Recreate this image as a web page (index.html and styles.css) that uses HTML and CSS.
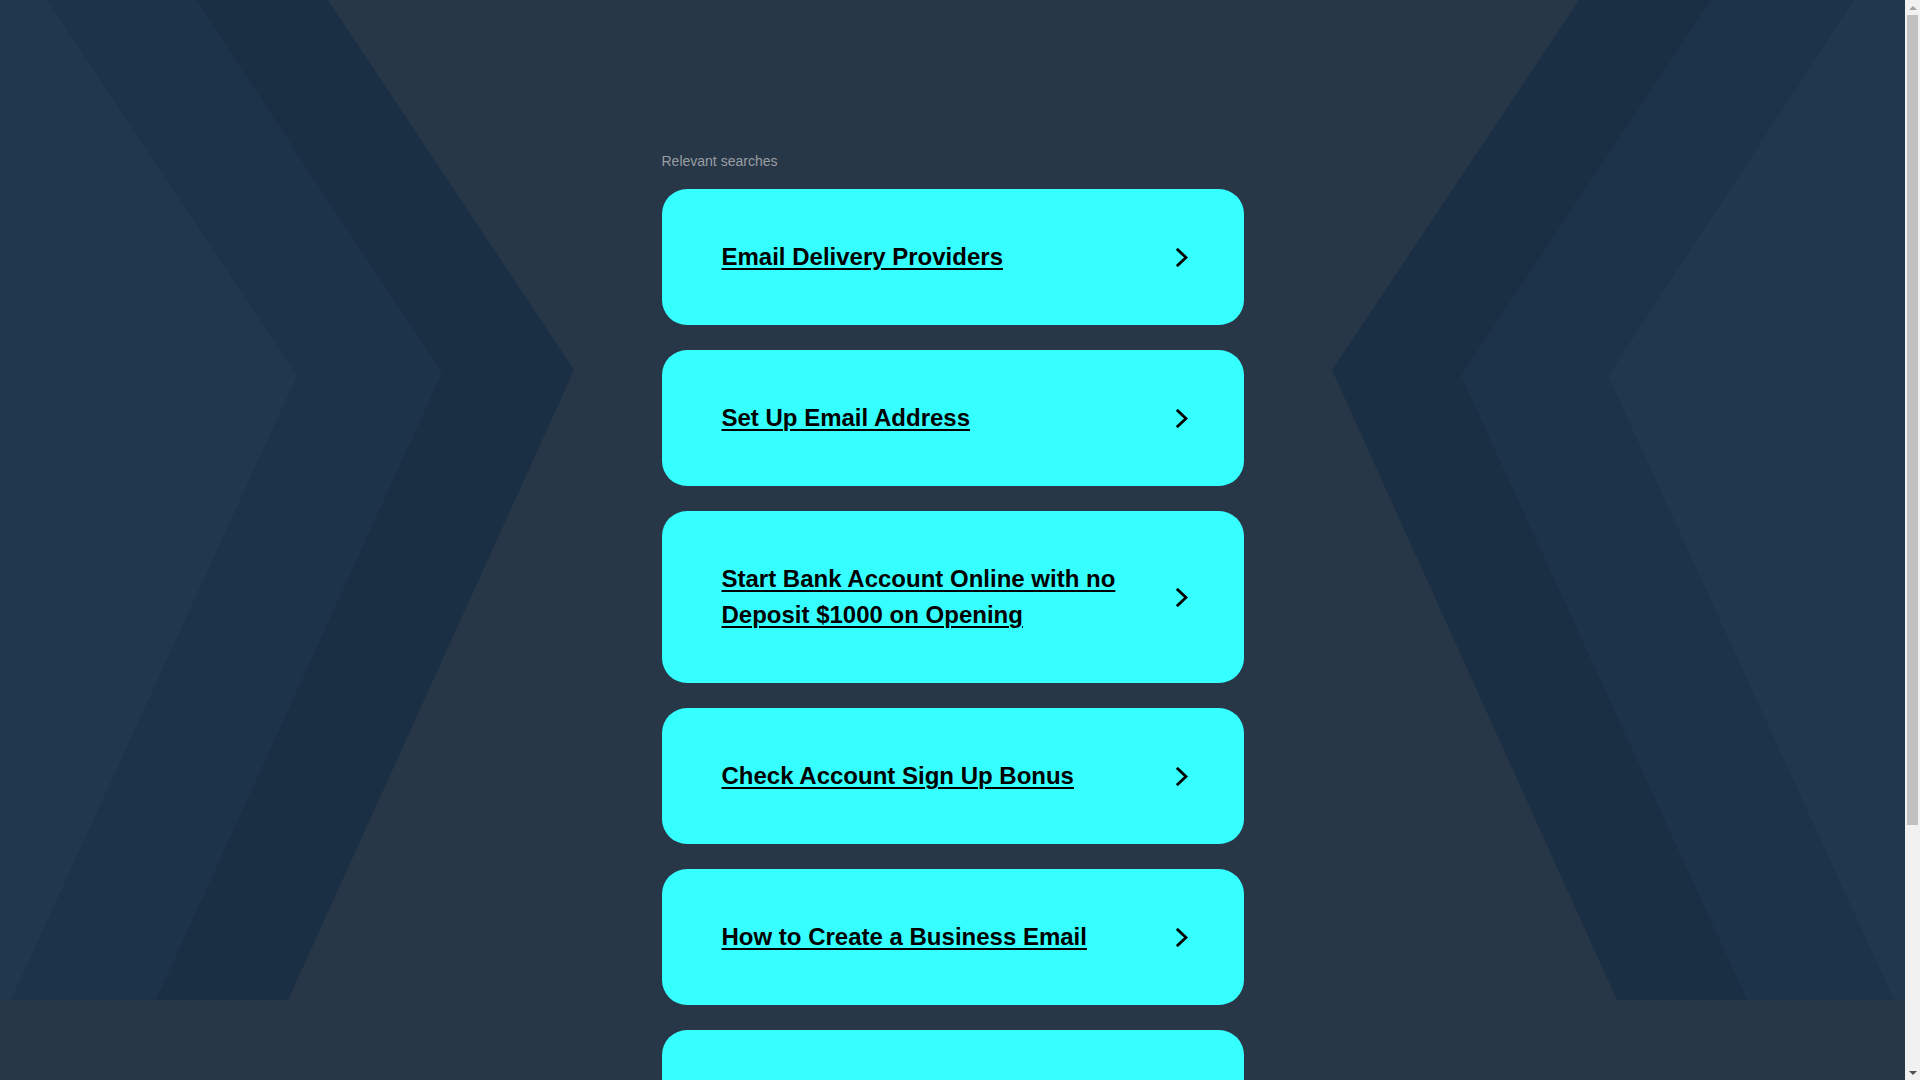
FILE: index.html
```html
<!DOCTYPE html>
<html lang="en">
<head>
<meta charset="utf-8">
<title>Relevant searches</title>
<link rel="stylesheet" href="styles.css">
</head>
<body>
<main class="page">
  <section class="searches">
    <p class="label">Relevant searches</p>
    <ul class="list">
      <li><a class="card" href="#"><span class="card-text">Email Delivery Providers</span><svg class="chev" viewBox="0 0 12 19" width="12" height="19"><polyline points="1.8,1.8 10,9.5 1.8,17.2"/></svg></a></li>
      <li><a class="card" href="#"><span class="card-text">Set Up Email Address</span><svg class="chev" viewBox="0 0 12 19" width="12" height="19"><polyline points="1.8,1.8 10,9.5 1.8,17.2"/></svg></a></li>
      <li><a class="card" href="#"><span class="card-text">Start Bank Account Online with no Deposit $1000 on Opening</span><svg class="chev" viewBox="0 0 12 19" width="12" height="19"><polyline points="1.8,1.8 10,9.5 1.8,17.2"/></svg></a></li>
      <li><a class="card" href="#"><span class="card-text">Check Account Sign Up Bonus</span><svg class="chev" viewBox="0 0 12 19" width="12" height="19"><polyline points="1.8,1.8 10,9.5 1.8,17.2"/></svg></a></li>
      <li><a class="card" href="#"><span class="card-text">How to Create a Business Email</span><svg class="chev" viewBox="0 0 12 19" width="12" height="19"><polyline points="1.8,1.8 10,9.5 1.8,17.2"/></svg></a></li>
      <li><a class="card" href="#"><span class="card-text">Email Hosting Services</span><svg class="chev" viewBox="0 0 12 19" width="12" height="19"><polyline points="1.8,1.8 10,9.5 1.8,17.2"/></svg></a></li>
    </ul>
  </section>
</main>
<div class="scrollbar" aria-hidden="true">
  <div class="sb-btn"><span class="sb-up"></span></div>
  <div class="sb-thumb"></div>
  <div class="sb-track"></div>
  <div class="sb-btn"><span class="sb-down"></span></div>
</div>
</body>
</html>
```

FILE: styles.css
```css
html, body {
  margin: 0;
  padding: 0;
}

body {
  background-color: #273747;
  font-family: "Liberation Sans", Arial, sans-serif;
}

.page {
  width: calc(100% - 15px);
  display: flex;
  justify-content: center;
  padding: 153px 0 234px;
  background-image: url("data:image/svg+xml,%3Csvg xmlns='http://www.w3.org/2000/svg' viewBox='0 0 1905 1000' preserveAspectRatio='none'%3E%3Cpolygon fill='%231a2f44' points='0,0 328,0 574,370 288,1000 0,1000'/%3E%3Cpolygon fill='%231c3349' points='0,0 196,0 442,373 156,1000 0,1000'/%3E%3Cpolygon fill='%231f384e' points='0,0 47,0 297,376 11,1000 0,1000'/%3E%3Cpolygon fill='%231a2f44' points='1905,0 1579,0 1332,370 1617,1000 1905,1000'/%3E%3Cpolygon fill='%231c3349' points='1905,0 1711,0 1461,376 1747,1000 1905,1000'/%3E%3Cpolygon fill='%231f384e' points='1905,0 1854,0 1608,376 1894,1000 1905,1000'/%3E%3C/svg%3E");
  background-repeat: no-repeat;
  background-position: top left;
  background-size: 100% 1000px;
}

.searches {
  width: 582px;
}

.label {
  margin: 0 0 20px;
  font-size: 14px;
  line-height: 16px;
  color: #9a9ea3;
}

.list {
  list-style: none;
  margin: 0;
  padding: 0;
  display: flex;
  flex-direction: column;
  gap: 25px;
}

.card {
  display: flex;
  align-items: center;
  justify-content: space-between;
  gap: 30px;
  padding: 50px 56px 50px 60px;
  background: #36ffff;
  border-radius: 25px;
  color: #000;
  text-decoration: none;
}

.card-text {
  flex: 1;
  font-size: 24px;
  line-height: 36px;
  font-weight: bold;
  text-decoration: underline;
  text-decoration-thickness: 2px;
  text-underline-offset: 3px;
}

.chev {
  flex: none;
  fill: none;
  stroke: #000;
  stroke-width: 2.8;
  stroke-linecap: square;
  stroke-linejoin: miter;
}

/* simulated classic browser scrollbar */
.scrollbar {
  position: fixed;
  top: 0;
  right: 0;
  width: 15px;
  height: 100vh;
  background: #f1f1f1;
  display: flex;
  flex-direction: column;
}

.sb-btn {
  height: 15px;
  flex: none;
  display: flex;
  align-items: center;
  justify-content: center;
}

.sb-up {
  width: 0;
  height: 0;
  border-left: 4px solid transparent;
  border-right: 4px solid transparent;
  border-bottom: 4px solid #a3a3a3;
}

.sb-down {
  width: 0;
  height: 0;
  border-left: 4px solid transparent;
  border-right: 4px solid transparent;
  border-top: 4px solid #505050;
}

.sb-thumb {
  flex: none;
  height: 810px;
  margin: 0 2px;
  background: #c1c1c1;
}

.sb-track {
  flex: 1;
}
```
